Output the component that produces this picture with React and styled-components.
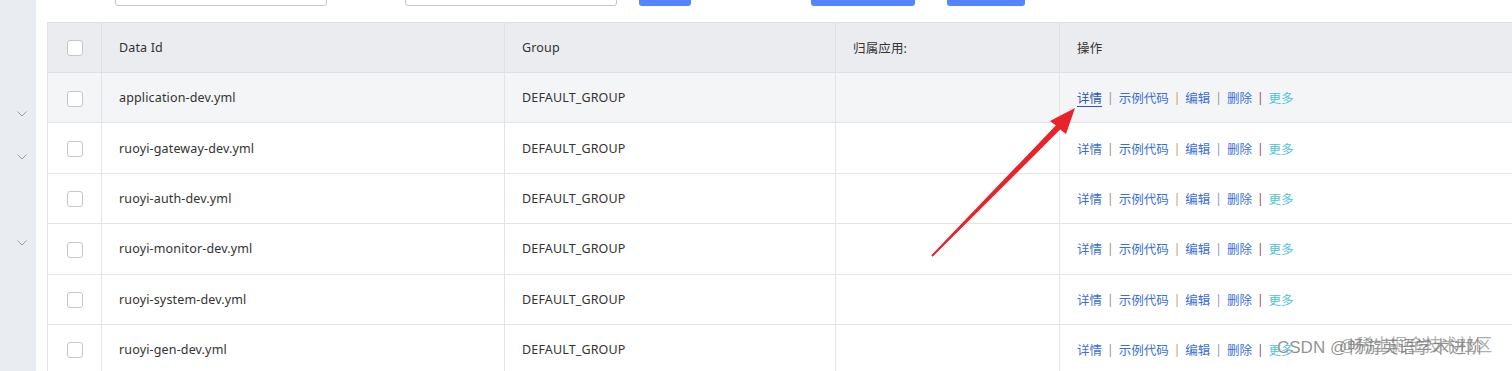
import React from "react";
import styled, { createGlobalStyle } from "styled-components";

const GlobalStyle = createGlobalStyle`
  html, body {
    margin: 0;
    padding: 0;
    background: #fff;
  }
  body {
    font-family: "Noto Sans", "Noto Sans CJK SC", sans-serif;
  }
`;

const rows = [
  "application-dev.yml",
  "ruoyi-gateway-dev.yml",
  "ruoyi-auth-dev.yml",
  "ruoyi-monitor-dev.yml",
  "ruoyi-system-dev.yml",
  "ruoyi-gen-dev.yml",
];

const menu = [false, false, true, true, false, true, false, false];

const actions = [
  { label: "详情", sep: "#9c8f70" },
  { label: "示例代码", sep: "#c99a50" },
  { label: "编辑", sep: "#8c95a8" },
  { label: "删除", sep: "#a0405e" },
  { label: "更多", more: true },
];

const Chevron = () => (
  <svg width="10" height="6" viewBox="0 0 10 6">
    <polyline points="0.5,0.5 5,5 9.5,0.5" fill="none" stroke="#9a9da3" strokeWidth="1" />
  </svg>
);

const Arrow = () => (
  <ArrowLayer width="1512" height="371" viewBox="0 0 1512 371">
    <polygon
      points="931.3,255.3 1055.8,125.4 1050,121 1075,108 1066,134 1060.2,129.6 932.7,256.7"
      fill="#e8232a"
    />
  </ArrowLayer>
);

const App = () => {
  return (
    <Page>
      <GlobalStyle />
      <Sidebar>
        {menu.map((open, i) => (
          <MenuItem key={i}>{open && <Chevron />}</MenuItem>
        ))}
      </Sidebar>
      <Main>
        <Toolbar>
          <Input w={212} gap={68} />
          <Input w={212} gap={78} />
          <Button w={52} gap={22} />
          <Button w={104} gap={120} />
          <Button w={78} gap={32} />
        </Toolbar>
        <Table>
          <colgroup>
            <col style={{ width: 54 }} />
            <col style={{ width: 403 }} />
            <col style={{ width: 331 }} />
            <col style={{ width: 224 }} />
            <col />
          </colgroup>
          <thead>
            <tr>
              <HeadCell center>
                <Checkbox />
              </HeadCell>
              <HeadCell>Data Id</HeadCell>
              <HeadCell>Group</HeadCell>
              <HeadCell>归属应用:</HeadCell>
              <HeadCell>操作</HeadCell>
            </tr>
          </thead>
          <tbody>
            {rows.map((id, i) => (
              <Row key={id} hover={i === 0}>
                <Cell center>
                  <Checkbox />
                </Cell>
                <Cell>{id}</Cell>
                <Cell>DEFAULT_GROUP</Cell>
                <Cell />
                <Cell>
                  <Actions>
                    {actions.map((a, j) => (
                      <React.Fragment key={a.label}>
                        <Link more={a.more} active={i === 0 && j === 0}>
                          {a.label}
                        </Link>
                        {a.sep && <Sep c={a.sep}>|</Sep>}
                      </React.Fragment>
                    ))}
                  </Actions>
                </Cell>
              </Row>
            ))}
          </tbody>
        </Table>
      </Main>
      <Arrow />
      <Watermark>
        <Mark>CSDN @畅游英语学术进阶</Mark>
        <MarkOver>@稀土掘金技术社区</MarkOver>
      </Watermark>
    </Page>
  );
};
export default App;

const Page = styled.div`
  position: relative;
  display: flex;
  width: 1512px;
  height: 371px;
  overflow: hidden;
  background: #fff;
`;

const Sidebar = styled.div`
  width: 36px;
  flex-shrink: 0;
  background: #e9ecf0;
  padding-top: 6px;
  display: flex;
  flex-direction: column;
`;

const MenuItem = styled.div`
  height: 43px;
  flex-shrink: 0;
  display: flex;
  align-items: center;
  justify-content: flex-end;
  padding-right: 9px;
`;

const Main = styled.div`
  flex: 1;
  padding-left: 11px;
  display: flex;
  flex-direction: column;
`;

const Toolbar = styled.div`
  height: 22px;
  flex-shrink: 0;
  display: flex;
  align-items: flex-start;
  overflow: hidden;
`;

const Input = styled.div`
  width: ${(p) => p.w}px;
  height: 28px;
  margin-top: -22px;
  margin-left: ${(p) => p.gap}px;
  box-sizing: border-box;
  border: 1px solid #c4c6cf;
  border-radius: 3px;
  background: #fff;
`;

const Button = styled.div`
  width: ${(p) => p.w}px;
  height: 28px;
  margin-top: -22px;
  margin-left: ${(p) => p.gap}px;
  border-radius: 3px;
  background: #5584ff;
`;

const Table = styled.table`
  width: 100%;
  border-collapse: collapse;
  table-layout: fixed;
  border-left: 1px solid #e3e4e8;
  font-size: 12.5px;
  letter-spacing: 0.15px;
  color: #333;
`;

const HeadCell = styled.th`
  height: 49px;
  padding: 0 17px;
  background: #ebecf0;
  border-top: 1px solid #dfe0e4;
  border-bottom: 1px solid #dfe0e4;
  border-right: 1px solid #dfe0e4;
  text-align: ${(p) => (p.center ? "center" : "left")};
  font-weight: 400;
  vertical-align: middle;
  &:last-child {
    border-right: none;
  }
`;

const Row = styled.tr`
  background: ${(p) => (p.hover ? "#f4f5f7" : "#fff")};
`;

const Cell = styled.td`
  height: 49.4px;
  padding: ${(p) => (p.center ? "0" : "0 17px")};
  border-bottom: 1px solid #e3e4e8;
  border-right: 1px solid #e3e4e8;
  text-align: ${(p) => (p.center ? "center" : "left")};
  vertical-align: middle;
  white-space: nowrap;
  &:last-child {
    border-right: none;
  }
`;

const Checkbox = styled.span`
  display: inline-block;
  vertical-align: middle;
  width: 16px;
  height: 16px;
  box-sizing: border-box;
  border: 1px solid #c4c6cf;
  border-radius: 3px;
  background: #fff;
`;

const Actions = styled.div`
  display: flex;
  align-items: center;
  letter-spacing: 0;
`;

const Link = styled.span`
  color: ${(p) => (p.more ? "#4cc3d6" : p.active ? "#2b56b8" : "#3a6fd8")};
  text-decoration: ${(p) => (p.active ? "underline" : "none")};
  text-underline-offset: 3px;
`;

const Sep = styled.span`
  color: ${(p) => p.c};
  margin: 0 5px;
  font-size: 12px;
`;

const ArrowLayer = styled.svg`
  position: absolute;
  left: 0;
  top: 0;
  pointer-events: none;
`;

const Watermark = styled.div`
  position: absolute;
  left: 1277px;
  top: 336px;
  font-size: 17px;
  line-height: 24px;
  white-space: nowrap;
  pointer-events: none;
  font-family: "Liberation Sans", "Noto Sans CJK SC", sans-serif;
`;

const Mark = styled.span`
  color: rgba(110, 110, 110, 0.75);
  text-shadow: 0 0 1px #fff;
`;

const MarkOver = styled.span`
  position: absolute;
  left: 62px;
  top: -2px;
  color: rgba(120, 120, 120, 0.6);
`;
